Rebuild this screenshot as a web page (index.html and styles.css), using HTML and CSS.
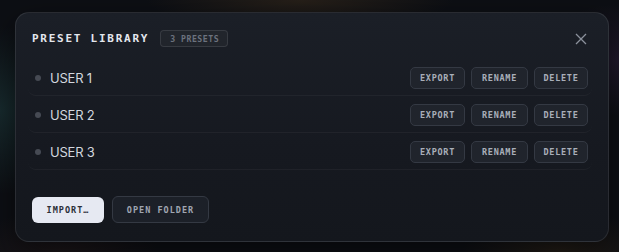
FILE: index.html
```html
<!DOCTYPE html>
<html>
<head>
<meta charset="utf-8">
<link rel="stylesheet" href="styles.css">
</head>
<body>
<div class="panel">
  <div class="header">
    <div class="title">PRESET LIBRARY</div>
    <div class="badge">3 PRESETS</div>
    <button class="close" aria-label="Close">
      <svg width="12" height="12" viewBox="0 0 12 12"><path d="M1 1L11 11M11 1L1 11" stroke="#8b919c" stroke-width="1.3" fill="none"/></svg>
    </button>
  </div>
  <div class="list">
    <div class="row">
      <span class="dot"></span><span class="name">USER 1</span>
      <div class="actions"><button class="btn">EXPORT</button><button class="btn">RENAME</button><button class="btn">DELETE</button></div>
    </div>
    <div class="row">
      <span class="dot"></span><span class="name">USER 2</span>
      <div class="actions"><button class="btn">EXPORT</button><button class="btn">RENAME</button><button class="btn">DELETE</button></div>
    </div>
    <div class="row">
      <span class="dot"></span><span class="name">USER 3</span>
      <div class="actions"><button class="btn">EXPORT</button><button class="btn">RENAME</button><button class="btn">DELETE</button></div>
    </div>
  </div>
  <div class="divider"></div>
  <div class="footer">
    <button class="fbtn primary">IMPORT…</button>
    <button class="fbtn secondary">OPEN FOLDER</button>
  </div>
</div>
</body>
</html>
```
FILE: styles.css
```css
html, body { margin: 0; height: 100%; }
body {
  width: 619px;
  height: 252px;
  box-sizing: border-box;
  padding: 12px 10px 10px 15px;
  overflow: hidden;
  background:
    radial-gradient(ellipse 140px 120px at 0px 110px, rgba(30,60,62,0.6), transparent 70%),
    radial-gradient(ellipse 220px 40px at 300px 0px, rgba(70,52,30,0.45), transparent 70%),
    radial-gradient(ellipse 120px 80px at 619px 60px, rgba(55,35,70,0.45), transparent 70%),
    radial-gradient(ellipse 140px 60px at 560px 252px, rgba(60,45,25,0.45), transparent 70%),
    radial-gradient(ellipse 140px 60px at 60px 252px, rgba(45,30,30,0.45), transparent 70%),
    #0d0f14;
  font-family: "Inter", "Noto Sans", sans-serif;
}
.panel {
  height: 230px;
  box-sizing: border-box;
  border: 1px solid rgba(255,255,255,0.09);
  border-radius: 14px;
  background: linear-gradient(180deg, #1b1f27 0%, #161920 60%, #14171d 100%);
  padding: 17px 16px 18px 16px;
  display: flex;
  flex-direction: column;
  box-shadow: 0 10px 30px rgba(0,0,0,0.5);
}
.header {
  display: flex;
  align-items: center;
  height: 17px;
}
.title {
  font-family: "DejaVu Sans Mono", monospace;
  font-weight: bold;
  font-size: 11px;
  letter-spacing: 1.75px;
  color: #e4e7ee;
}
.badge {
  margin-left: 11px;
  height: 17px;
  box-sizing: border-box;
  padding: 0 8px 0 9px;
  display: flex;
  align-items: center;
  border: 1px solid rgba(255,255,255,0.1);
  background: rgba(255,255,255,0.03);
  border-radius: 4px;
  font-family: "DejaVu Sans Mono", monospace;
  font-weight: bold;
  font-size: 8.2px;
  letter-spacing: 0.5px;
  color: #6c727e;
}
.close {
  margin-left: auto;
  margin-right: 5px;
  background: none;
  border: 0;
  padding: 0;
  width: 12px;
  height: 12px;
  display: flex;
}
.list {
  margin: 12px 0 0 -4px;
  display: flex;
  flex-direction: column;
}
.row {
  height: 37px;
  box-sizing: border-box;
  display: flex;
  align-items: center;
  padding: 1px 4px 0 7px;
  border-bottom: 1px solid rgba(255,255,255,0.045);
  border-radius: 8px;
}
.dot {
  width: 6px;
  height: 6px;
  border-radius: 50%;
  background: #464a53;
  margin-right: 9px;
}
.name {
  font-size: 13px;
  color: #d2d6de;
  letter-spacing: -0.2px;
}
.actions {
  margin-left: auto;
  display: flex;
  gap: 6px;
}
.btn {
  height: 22px;
  box-sizing: border-box;
  padding: 0;
  border: 1px solid #343943;
  background: #20242c;
  border-radius: 5px;
  font-family: "DejaVu Sans Mono", monospace;
  font-weight: bold;
  font-size: 8.5px;
  letter-spacing: 0.7px;
  color: #a9afba;
}
.btn:nth-child(1) { width: 55px; }
.btn:nth-child(2) { width: 57px; }
.btn:nth-child(3) { width: 54px; }
.divider {
  height: 1px;
  background: rgba(255,255,255,0.07);
  margin-top: 13px;
}
.footer {
  margin-top: 13px;
  display: flex;
  align-items: center;
  gap: 8px;
}
.fbtn {
  height: 27px;
  box-sizing: border-box;
  border-radius: 6px;
  font-family: "DejaVu Sans Mono", monospace;
  font-weight: bold;
  font-size: 8.5px;
  letter-spacing: 1px;
  padding: 0;
}
.primary {
  width: 72px;
  height: 26px;
  background: #e6e9f2;
  border: 0;
  color: #2b2f38;
}
.secondary {
  width: 97px;
  background: #1c2028;
  border: 1px solid #343943;
  color: #a0a6b2;
}
```
